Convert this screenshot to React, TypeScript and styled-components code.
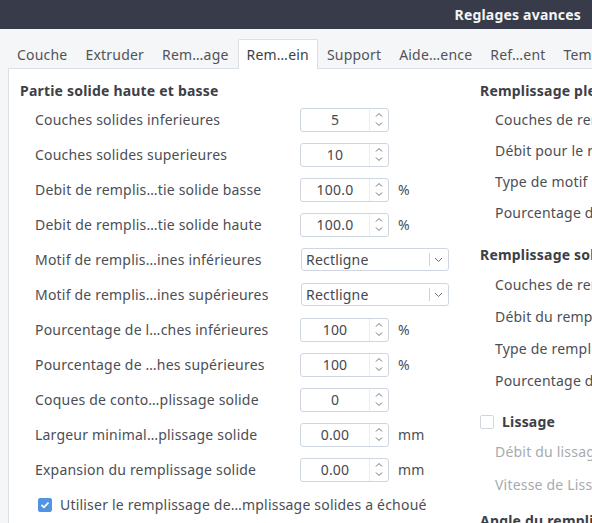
import styled, { createGlobalStyle } from "styled-components";

const GlobalStyle = createGlobalStyle`
  html, body {
    margin: 0;
    padding: 0;
    overflow: hidden;
    background: #f5f6f7;
    font-family: "Noto Sans", "Open Sans", sans-serif;
    font-size: 14px;
    letter-spacing: 0.2px;
    color: #4b4e55;
  }
`;

const Window = styled.div`
  width: 592px;
  height: 523px;
  overflow: hidden;
  background: #f5f6f7;
`;

const TitleBar = styled.div`
  height: 29px;
  background: #383c4a;
  display: flex;
  align-items: center;
  justify-content: flex-end;
  padding-right: 11px;
`;

const Title = styled.span`
  color: #f3f4f6;
  font-weight: 700;
  font-size: 14px;
`;

const TabBar = styled.div`
  display: flex;
  padding: 10px 0 0 8px;
  height: 29px;
  white-space: nowrap;
`;

const Tab = styled.div<{ $active?: boolean }>`
  display: flex;
  align-items: center;
  padding: 0 8px;
  box-sizing: border-box;
  color: ${(p) => (p.$active ? "#3d4047" : "#50535a")};
  background: ${(p) => (p.$active ? "#ffffff" : "transparent")};
  border: 1px solid ${(p) => (p.$active ? "#dcdfe3" : "transparent")};
  border-bottom: none;
  border-radius: 2px 2px 0 0;
  position: relative;
  z-index: 1;
  margin-bottom: -1px;
  height: 30px;
`;

const Pane = styled.div`
  margin-left: 8px;
  width: 900px;
  height: 600px;
  background: #ffffff;
  border: 1px solid #dcdfe3;
  box-sizing: border-box;
  display: grid;
  grid-template-columns: 460px 1fr;
  padding: 12px 0 0 11px;
`;

const Column = styled.div`
  display: flex;
  flex-direction: column;
`;

const Header = styled.div<{ $top?: number; $bottom?: number }>`
  font-weight: 700;
  color: #3d4047;
  line-height: 20px;
  margin-top: ${(p) => p.$top ?? 0}px;
  margin-bottom: ${(p) => p.$bottom ?? 0}px;
  display: flex;
  align-items: center;
  gap: 8px;
  white-space: nowrap;
`;

const Row = styled.div<{ $h: number; $disabled?: boolean }>`
  display: flex;
  align-items: center;
  height: ${(p) => p.$h}px;
  padding-left: 15px;
  white-space: nowrap;
  color: ${(p) => (p.$disabled ? "#a7aaaf" : "#4b4e55")};
`;

const Label = styled.span`
  width: 265px;
  flex: none;
`;

const Spin = styled.div`
  display: flex;
  width: 89px;
  height: 24px;
  box-sizing: border-box;
  border: 1px solid #cfd6e0;
  border-radius: 3px;
  background: #fff;
`;

const SpinValue = styled.span`
  flex: 1;
  display: flex;
  align-items: center;
  justify-content: center;
  color: #45484f;
`;

const SpinArrows = styled.span`
  width: 18px;
  border-left: 1px solid #eceef2;
  display: flex;
  flex-direction: column;
  align-items: center;
  justify-content: center;
  gap: 5px;
`;

const Unit = styled.span`
  margin-left: 9px;
  color: #4b4e55;
`;

const Select = styled.div`
  display: flex;
  width: 148px;
  height: 23px;
  box-sizing: border-box;
  border: 1px solid #cfd6e0;
  border-radius: 3px;
  background: #fff;
  margin-left: 1px;
`;

const SelectValue = styled.span`
  flex: 1;
  display: flex;
  align-items: center;
  padding-left: 4px;
  color: #45484f;
`;

const SelectButton = styled.span`
  width: 19px;
  display: flex;
  align-items: center;
  justify-content: center;
  position: relative;
  &::before {
    content: "";
    position: absolute;
    left: 0;
    top: 4px;
    bottom: 4px;
    border-left: 1px solid #cfd2d7;
  }
`;

const Check = styled.span<{ $checked?: boolean }>`
  width: 14px;
  height: 14px;
  box-sizing: border-box;
  border-radius: 2px;
  flex: none;
  display: flex;
  align-items: center;
  justify-content: center;
  background: ${(p) => (p.$checked ? "#5294e2" : "#ffffff")};
  border: 1px solid ${(p) => (p.$checked ? "#5294e2" : "#cfd6e0")};
`;

const CheckRow = styled.div`
  display: flex;
  align-items: center;
  gap: 8px;
  height: 35px;
  padding-left: 18px;
  white-space: nowrap;
`;

const Up = () => (
  <svg width="8" height="5" viewBox="0 0 8 5">
    <path d="M1 4.5 L4 1.5 L7 4.5" fill="none" stroke="#6a6e76" strokeWidth="1" />
  </svg>
);

const Down = () => (
  <svg width="8" height="5" viewBox="0 0 8 5">
    <path d="M1 0.5 L4 3.5 L7 0.5" fill="none" stroke="#6a6e76" strokeWidth="1" />
  </svg>
);

const Tick = () => (
  <svg width="10" height="8" viewBox="0 0 10 8">
    <path d="M1.5 4 L4 6.3 L8.5 1.5" fill="none" stroke="#fff" strokeWidth="1.8" />
  </svg>
);

const SpinBox = ({ value, unit }: { value: string; unit?: string }) => (
  <>
    <Spin>
      <SpinValue>{value}</SpinValue>
      <SpinArrows>
        <Up />
        <Down />
      </SpinArrows>
    </Spin>
    {unit && <Unit>{unit}</Unit>}
  </>
);

const Dropdown = ({ value }: { value: string }) => (
  <Select>
    <SelectValue>{value}</SelectValue>
    <SelectButton>
      <svg width="9" height="6" viewBox="0 0 9 6">
        <path d="M1 1 L4.5 4.5 L8 1" fill="none" stroke="#6a6e76" strokeWidth="1" />
      </svg>
    </SelectButton>
  </Select>
);

const tabs = [
  "Couche",
  "Extruder",
  "Rem…age",
  "Rem…ein",
  "Support",
  "Aide…ence",
  "Ref…ent",
  "Temperature",
];

type Field = { label: string; spin?: string; unit?: string; select?: string };

const leftFields: Field[] = [
  { label: "Couches solides inferieures", spin: "5" },
  { label: "Couches solides superieures", spin: "10" },
  { label: "Debit de remplis…tie solide basse", spin: "100.0", unit: "%" },
  { label: "Debit de remplis…tie solide haute", spin: "100.0", unit: "%" },
  { label: "Motif de remplis…ines inférieures", select: "Rectligne" },
  { label: "Motif de remplis…ines supérieures", select: "Rectligne" },
  { label: "Pourcentage de l…ches inférieures", spin: "100", unit: "%" },
  { label: "Pourcentage de …hes supérieures", spin: "100", unit: "%" },
  { label: "Coques de conto…plissage solide", spin: "0" },
  { label: "Largeur minimal…plissage solide", spin: "0.00", unit: "mm" },
  { label: "Expansion du remplissage solide", spin: "0.00", unit: "mm" },
];

export default function App() {
  return (
    <Window>
      <GlobalStyle />
      <TitleBar>
        <Title>Reglages avances</Title>
      </TitleBar>
      <TabBar>
        {tabs.map((t) => (
          <Tab key={t} $active={t === "Rem…ein"}>
            {t}
          </Tab>
        ))}
      </TabBar>
      <Pane>
        <Column>
          <Header $bottom={1}>Partie solide haute et basse</Header>
          {leftFields.map((f) => (
            <Row key={f.label} $h={35}>
              <Label>{f.label}</Label>
              {f.spin && <SpinBox value={f.spin} unit={f.unit} />}
              {f.select && <Dropdown value={f.select} />}
            </Row>
          ))}
          <CheckRow>
            <Check $checked>
              <Tick />
            </Check>
            <span>Utiliser le remplissage de…mplissage solides a échoué</span>
          </CheckRow>
        </Column>
        <Column>
          <Header $bottom={3}>Remplissage plein</Header>
          <Row $h={31}>Couches de remplissage plein</Row>
          <Row $h={31}>Débit pour le remplissage plein</Row>
          <Row $h={31}>Type de motif</Row>
          <Row $h={31}>Pourcentage de remplissage</Row>
          <Header $top={17} $bottom={3}>Remplissage solide</Header>
          <Row $h={32}>Couches de remplissage solide</Row>
          <Row $h={32}>Débit du remplissage solide</Row>
          <Row $h={32}>Type de remplissage</Row>
          <Row $h={32}>Pourcentage de remplissage</Row>
          <Header $top={16} $bottom={3}>
            <Check />
            Lissage
          </Header>
          <Row $h={33} $disabled>
            Débit du lissage
          </Row>
          <Row $h={33} $disabled>
            Vitesse de Lissage
          </Row>
          <Header $top={10}>Angle du remplissage</Header>
        </Column>
      </Pane>
    </Window>
  );
}
